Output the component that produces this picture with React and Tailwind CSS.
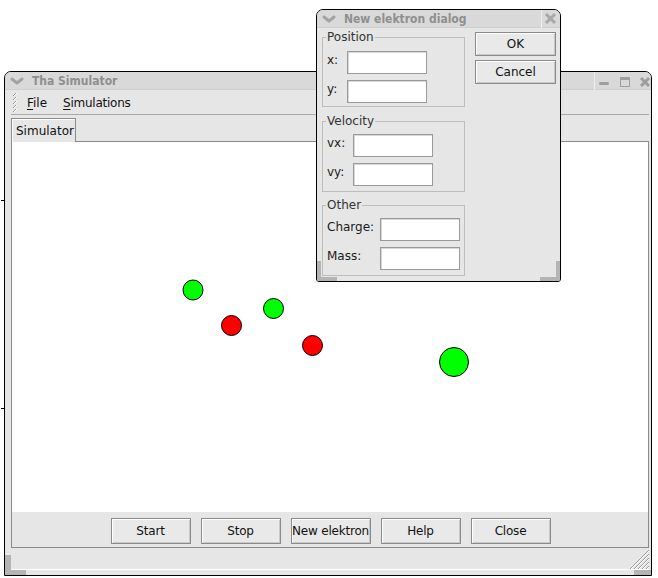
import React from 'react';

// Bluecurve-ish window chrome
function Chevron() {
    return (
        <svg width="14" height="8" viewBox="0 0 14 8" className="shrink-0">
            <polyline points="2,2 7,6 12,2" fill="none" stroke="#a3a3a3" strokeWidth="3" strokeLinecap="round" strokeLinejoin="round" />
        </svg>
    );
}

function TitleBar({ title, children }) {
    return (
        <div className="h-[18px] shrink-0 flex items-center bg-[#d9d9d9] border-b border-[#cfcfcf]">
            <div className="w-[5px] shrink-0" />
            <Chevron />
            <span className="ml-[8px] font-['DejaVu_Sans_Condensed','DejaVu_Sans',sans-serif] text-[12px] leading-[18px] font-bold text-[#8f8f8f] whitespace-nowrap">{title}</span>
            <div className="ml-auto flex h-full">{children}</div>
        </div>
    );
}

function GtkButton({ children, className = '' }) {
    return (
        <button
            type="button"
            className={`flex items-center justify-center border border-[#8a8a8a] bg-[#e9e9e9] shadow-[inset_1px_1px_0_#ffffff,inset_-1px_-1px_0_#c8c8c8] text-[#111] whitespace-nowrap ${className}`}
        >
            {children}
        </button>
    );
}

function Field({ label, labelW }) {
    return (
        <div className="flex items-start">
            <span className={`${labelW} shrink-0 pt-[2px] text-[12px] leading-[14px] text-[#1a1a1a]`}>{label}</span>
            <input type="text" className="w-[80px] h-[23px] border border-[#9a9a9a] bg-white shadow-[inset_1px_1px_0_#d8d8d8] outline-none" />
        </div>
    );
}

function Group({ legend, className = '', children }) {
    return (
        <fieldset className={`border border-[#bdbdbd] px-[4px] ${className}`}>
            <legend className="-ml-[1px] px-[1px] text-[12px] leading-[14px] text-[#333]">{legend}</legend>
            <div className="flex flex-col gap-[6px]">{children}</div>
        </fieldset>
    );
}

function MenuGrip() {
    return (
        <svg width="6" height="19" viewBox="0 0 6 19" className="shrink-0">
            {[0, 4, 8, 12, 16].map((y) => (
                <g key={y}>
                    <line x1="1" y1={y + 3} x2="4" y2={y} stroke="#9c9c9c" strokeWidth="1" />
                    <line x1="2" y1={y + 3} x2="5" y2={y} stroke="#ffffff" strokeWidth="1" />
                </g>
            ))}
        </svg>
    );
}

function ResizeGrip() {
    return (
        <svg width="23" height="22" viewBox="0 0 23 22" className="shrink-0">
            {[3, 7, 11, 15, 19].map((o) => (
                <g key={o}>
                    <line x1={23 - o} y1="22" x2="23" y2={22 - o} stroke="#9c9c9c" strokeWidth="1" />
                    <line x1={24 - o} y1="22" x2="23" y2={23 - o} stroke="#ffffff" strokeWidth="1" />
                </g>
            ))}
        </svg>
    );
}

const balls = [
    { cx: 181, cy: 148, r: 10, fill: '#00ff00' },
    { cx: 261.5, cy: 166.5, r: 10, fill: '#00ff00' },
    { cx: 219.5, cy: 183.5, r: 10, fill: '#ff0000' },
    { cx: 300.5, cy: 203.5, r: 10, fill: '#ff0000' },
    { cx: 442, cy: 220, r: 14.5, fill: '#00ff00' },
];

export default function App() {
    return (
        <div className="relative w-[658px] h-[578px] bg-white overflow-hidden font-['DejaVu_Sans','Bitstream_Vera_Sans',sans-serif] select-none">
            {/* bits of whatever is behind the window */}
            <div className="absolute left-[1px] top-[200px] w-[3px] h-px bg-black" />
            <div className="absolute left-[1px] top-[408px] w-[3px] h-px bg-black" />

            {/* Main window */}
            <div className="absolute left-[4px] top-[71px] w-[648px] h-[505px] border border-black rounded-t-[7px] bg-[#e6e6e6] flex flex-col overflow-hidden">
                <TitleBar title="Tha Simulator">
                    <svg width="57" height="18" viewBox="0 0 57 18">
                        <line x1="0.5" y1="0" x2="0.5" y2="18" stroke="#efefef" />
                        <rect x="5" y="10" width="10" height="3" rx="1.5" fill="#9e9e9e" />
                        <rect x="26.5" y="5.5" width="9" height="9" fill="none" stroke="#9e9e9e" />
                        <rect x="26" y="5" width="10" height="3" fill="#9e9e9e" />
                        <line x1="47" y1="6" x2="55" y2="14" stroke="#9e9e9e" strokeWidth="3" />
                        <line x1="55" y1="6" x2="47" y2="14" stroke="#9e9e9e" strokeWidth="3" />
                    </svg>
                </TitleBar>

                <div className="flex-1 flex flex-col pl-[6px] pr-[2px] min-h-0">
                    {/* Menu bar */}
                    <div className="h-[25px] shrink-0 flex items-center border-b border-[#a9a9a9] pl-[1px] pt-[1px] text-[12px] text-[#111]">
                        <MenuGrip />
                        <span className="ml-[9px]"><span className="underline underline-offset-2">F</span>ile</span>
                        <span className="ml-[16px] tracking-[-0.25px]"><span className="underline underline-offset-2">S</span>imulations</span>
                    </div>

                    {/* Tabs */}
                    <div className="h-[26px] shrink-0 flex items-end">
                        <div className="relative z-10 h-[24px] w-[65px] -mb-px border-l border-t border-r border-[#8a8a8a] bg-[#e6e6e6] shadow-[inset_1px_1px_0_#ffffff] flex items-center pl-[4px] text-[12px] text-[#111]">
                            Simulator
                        </div>
                    </div>

                    {/* Tab pane */}
                    <div className="flex-1 min-h-0 flex flex-col border border-[#8a8a8a]">
                        <div className="relative flex-1 bg-white">
                            <svg className="absolute inset-0 w-full h-full">
                                {balls.map((b, i) => (
                                    <circle key={i} cx={b.cx} cy={b.cy} r={b.r} fill={b.fill} stroke="#000" strokeWidth="1" />
                                ))}
                            </svg>
                        </div>
                        <div className="h-[35px] shrink-0 flex justify-center gap-[10px] pt-[6px] pl-px">
                            {['Start', 'Stop', 'New elektron', 'Help', 'Close'].map((t) => (
                                <GtkButton key={t} className="w-[80px] h-[26px] text-[12px] tracking-[-0.2px]">{t}</GtkButton>
                            ))}
                        </div>
                    </div>

                    {/* Status bar */}
                    <div className="h-[22px] shrink-0 flex justify-end items-end border-b border-white">
                        <ResizeGrip />
                    </div>
                </div>
                <div className="h-[5px] shrink-0" />

                {/* frame corner handles */}
                <div className="absolute left-0 bottom-0 w-[21px] h-[5px] bg-[#b4b4b4]" />
                <div className="absolute left-0 bottom-0 w-[6px] h-[20px] bg-[#b4b4b4]" />
                <div className="absolute right-0 bottom-0 w-[17px] h-[5px] bg-[#b4b4b4]" />
            </div>

            {/* Dialog */}
            <div className="absolute left-[316px] top-[9px] w-[245px] h-[273px] border border-black rounded-t-[7px] rounded-b-[3px] bg-[#e6e6e6] flex flex-col overflow-hidden">
                <TitleBar title="New elektron dialog">
                    <svg width="19" height="18" viewBox="0 0 19 18">
                        <line x1="0.5" y1="0" x2="0.5" y2="18" stroke="#efefef" />
                        <line x1="5" y1="4" x2="14" y2="13" stroke="#a8a8a8" strokeWidth="3" />
                        <line x1="14" y1="4" x2="5" y2="13" stroke="#a8a8a8" strokeWidth="3" />
                    </svg>
                </TitleBar>

                <div className="flex-1 flex pl-[5px]">
                    <div className="w-[143px] shrink-0 pt-[2px] flex flex-col">
                        <Group legend="Position" className="pt-[7px] pb-[3px]">
                            <Field label="x:" labelW="w-[20px]" />
                            <Field label="y:" labelW="w-[20px]" />
                        </Group>
                        <Group legend="Velocity" className="mt-[7px] pt-[6px] pb-[5px]">
                            <Field label="vx:" labelW="w-[26px]" />
                            <Field label="vy:" labelW="w-[26px]" />
                        </Group>
                        <Group legend="Other" className="mt-[6px] pt-[6px] pb-[5px]">
                            <Field label="Charge:" labelW="w-[53px]" />
                            <Field label="Mass:" labelW="w-[53px]" />
                        </Group>
                    </div>
                    <div className="ml-[10px] w-[81px] pt-[4px] flex flex-col gap-[4px]">
                        <GtkButton className="h-[24px] text-[12px]">OK</GtkButton>
                        <GtkButton className="h-[24px] text-[12px]">Cancel</GtkButton>
                    </div>
                </div>

                <div className="absolute left-0 bottom-0 w-[20px] h-[4px] bg-[#b4b4b4]" />
                <div className="absolute left-0 bottom-0 w-[4px] h-[20px] bg-[#b4b4b4]" />
                <div className="absolute right-0 bottom-0 w-[20px] h-[4px] bg-[#b4b4b4]" />
                <div className="absolute right-0 bottom-0 w-[4px] h-[20px] bg-[#b4b4b4]" />
            </div>
        </div>
    );
}
